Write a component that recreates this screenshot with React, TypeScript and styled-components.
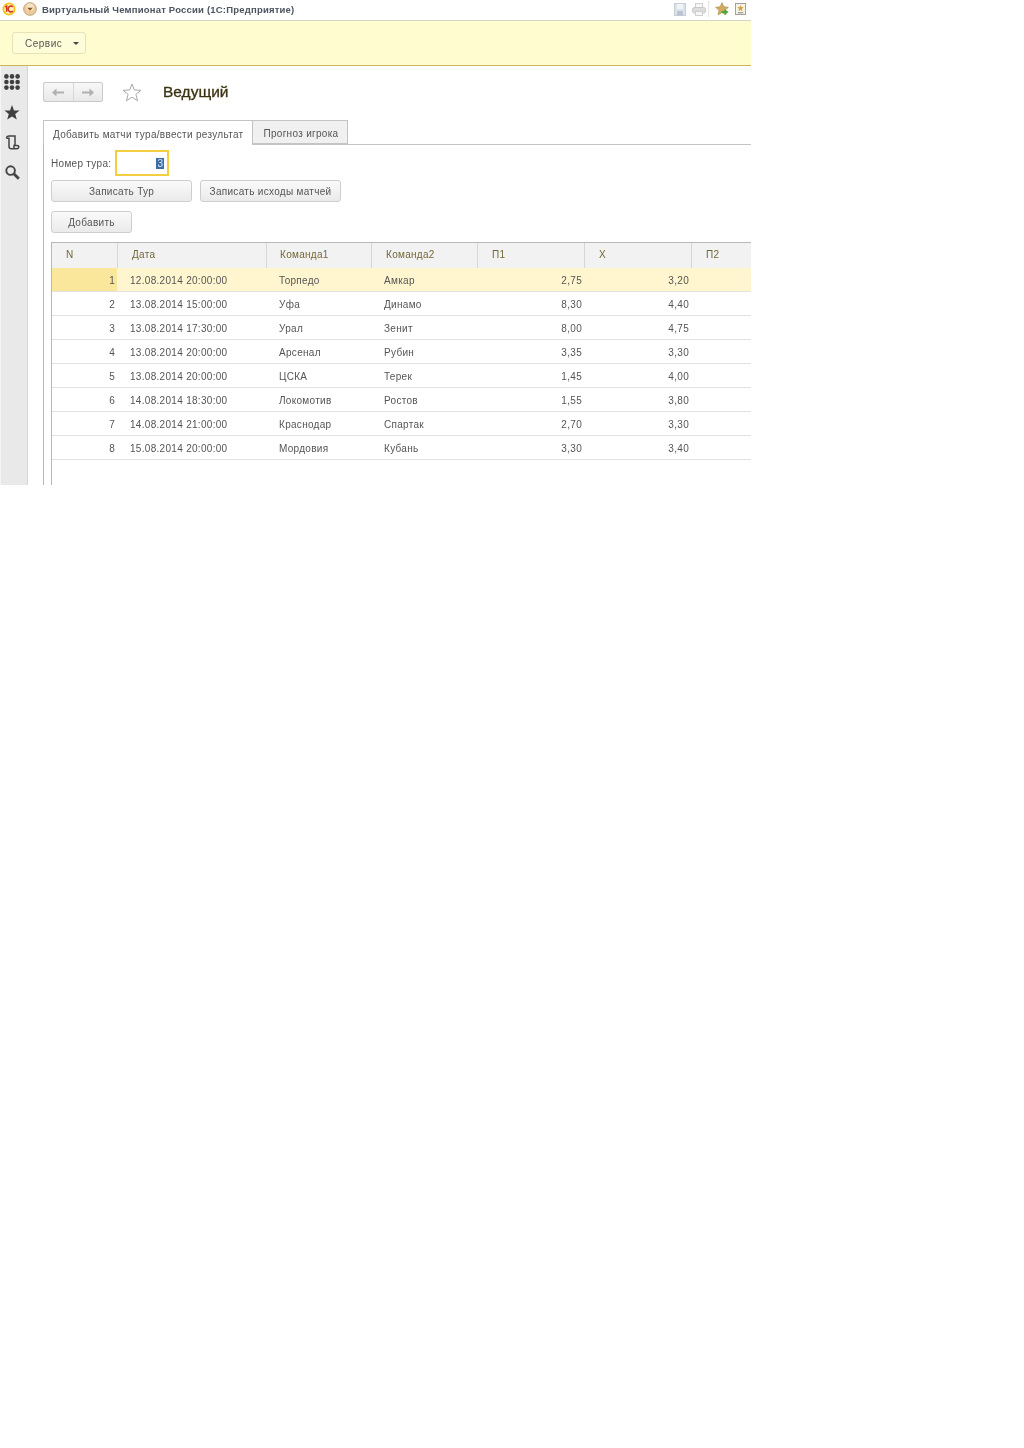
import React from 'react';
import styled, { createGlobalStyle } from 'styled-components';

const GlobalStyle = createGlobalStyle`
  html, body {
    margin: 0;
    padding: 0;
    background: #fff;
  }
  * {
    box-sizing: border-box;
  }
`;

const Window = styled.div`
  width: 751px;
  height: 485px;
  overflow: hidden;
  display: flex;
  flex-direction: column;
  font-family: 'Liberation Sans', Arial, sans-serif;
  font-size: 10px;
  letter-spacing: 0.3px;
  color: #555;
  background: #fff;
  filter: blur(0.25px);
`;

const TitleBar = styled.div`
  height: 21px;
  flex: none;
  display: flex;
  align-items: center;
  padding: 0 5px 2px 2px;
  border-bottom: 1px solid #d6d4c8;
`;

const TitleText = styled.span`
  margin-left: 5px;
  font-size: 9.5px;
  font-weight: bold;
  letter-spacing: 0.2px;
  color: #4c5560;
`;

const TitleIcons = styled.div`
  margin-left: auto;
  display: flex;
  align-items: center;
  gap: 6px;
`;

const Divider = styled.span`
  width: 1px;
  height: 16px;
  margin-left: -4px;
  background: #e6e6e6;
`;

const ServiceBar = styled.div`
  height: 45px;
  flex: none;
  display: flex;
  align-items: center;
  padding: 0 0 0 12px;
  background: #fffdd0;
  border-bottom: 1px solid #cdb65a;
`;

const ServiceButton = styled.div`
  width: 74px;
  height: 22px;
  display: flex;
  align-items: center;
  padding-left: 12px;
  gap: 11px;
  border: 1px solid #e8e2b4;
  border-radius: 3px;
  background: #fefdd9;
  letter-spacing: 0.5px;
`;

const Caret = styled.span`
  width: 0;
  height: 0;
  border-left: 3px solid transparent;
  border-right: 3px solid transparent;
  border-top: 3px solid #444;
`;

const Body = styled.div`
  flex: 1;
  display: flex;
  min-height: 0;
`;

const Sidebar = styled.div`
  width: 28px;
  flex: none;
  display: flex;
  flex-direction: column;
  align-items: center;
  gap: 15px;
  padding: 8px 4px 0 0;
  background: #e9e9e9;
  border-left: 1px solid #f6f6f6;
  border-right: 1px solid #d4d4d4;
`;

const Content = styled.div`
  flex: 1;
  min-width: 0;
  display: flex;
  flex-direction: column;
  padding: 15px 0 0 15px;
`;

const PageHeader = styled.div`
  height: 22px;
  flex: none;
  display: flex;
  align-items: center;
`;

const NavGroup = styled.div`
  width: 60px;
  height: 20px;
  display: flex;
  border: 1px solid #cacaca;
  border-radius: 2px;
  background: linear-gradient(#f8f8f8, #e8e8e8);
`;

const NavCell = styled.div<{ $divided?: boolean }>`
  flex: 1;
  display: flex;
  align-items: center;
  justify-content: center;
  border-left: ${({ $divided }) => ($divided ? '1px solid #d8d8d8' : 'none')};
`;

const StarSlot = styled.div`
  margin-left: 19px;
  display: flex;
`;

const PageTitle = styled.h1`
  margin: 0 0 0 21px;
  font-size: 15.5px;
  font-weight: normal;
  letter-spacing: 0;
  -webkit-text-stroke: 0.3px #3a3210;
  color: #3a3210;
`;

const TabStrip = styled.div`
  margin-top: 17px;
  height: 25px;
  flex: none;
  display: flex;
  border-bottom: 1px solid #c4c4c4;
`;

const Tab = styled.div<{ $active?: boolean }>`
  height: ${({ $active }) => ($active ? '25px' : '24px')};
  display: flex;
  align-items: center;
  padding: 2px 9px 0 ${({ $active }) => ($active ? '9px' : '10px')};
  border: 1px solid #c4c4c4;
  border-left: ${({ $active }) => ($active ? '1px solid #c4c4c4' : 'none')};
  border-bottom: ${({ $active }) => ($active ? 'none' : '1px solid #c4c4c4')};
  background: ${({ $active }) => ($active ? '#fff' : '#f0f0f0')};
  white-space: nowrap;
`;

const TabPanel = styled.div`
  flex: 1;
  display: flex;
  flex-direction: column;
  padding: 5px 0 0 7px;
  border-left: 1px solid #b8b8b8;
  min-height: 0;
`;

const FieldRow = styled.div`
  height: 26px;
  flex: none;
  display: flex;
  align-items: center;
  gap: 4px;
`;

const FieldInput = styled.div`
  width: 54px;
  height: 26px;
  display: flex;
  align-items: center;
  justify-content: flex-end;
  padding-right: 3px;
  border: 2px solid #f3cf3f;
  background: #fff;
`;

const SelectedValue = styled.span`
  padding: 0 1px;
  background: #3a6ea5;
  color: #d8e4f0;
`;

const ButtonRow = styled.div`
  display: flex;
  flex: none;
  gap: 8px;
  margin-top: 4px;
`;

const AddRow = styled(ButtonRow)`
  margin-top: 9px;
`;

const ActionButton = styled.div<{ $width: number }>`
  width: ${({ $width }) => $width}px;
  height: 22px;
  display: flex;
  align-items: center;
  justify-content: center;
  border: 1px solid #cecece;
  border-radius: 3px;
  background: linear-gradient(#fafafa, #eaeaea);
  white-space: nowrap;
`;

const Table = styled.div`
  margin-top: 9px;
  flex: 1;
  border-left: 1px solid #b8b8b8;
  border-top: 1px solid #b8b8b8;
`;

const GRID = '65px 149px 105px 106px 107px 107px 60px';

const HeaderRow = styled.div`
  height: 25px;
  display: grid;
  grid-template-columns: ${GRID};
  background: #f2f2f2;
`;

const HeaderCell = styled.div<{ $indent: number }>`
  display: flex;
  align-items: center;
  padding: 0 0 3px ${({ $indent }) => $indent}px;
  border-left: 1px solid #d6d6d6;
  color: #746838;

  &:first-child {
    border-left: none;
  }
`;

const DataRow = styled.div<{ $selected?: boolean }>`
  height: 24px;
  display: grid;
  grid-template-columns: ${GRID};
  border-bottom: 1px solid #e2e2e2;
  background: ${({ $selected }) => ($selected ? '#fff6cf' : '#fff')};
`;

const Cell = styled.div<{ $right?: boolean; $indent?: number; $current?: boolean }>`
  display: flex;
  align-items: center;
  justify-content: ${({ $right }) => ($right ? 'flex-end' : 'flex-start')};
  padding-top: 1px;
  padding-left: ${({ $indent }) => $indent ?? 0}px;
  padding-right: ${({ $right }) => ($right ? '2px' : '0')};
  background: ${({ $current }) => ($current ? '#fbe79b' : 'transparent')};
  white-space: nowrap;
`;

const matches = [
  ['12.08.2014 20:00:00', 'Торпедо', 'Амкар', '2,75', '3,20'],
  ['13.08.2014 15:00:00', 'Уфа', 'Динамо', '8,30', '4,40'],
  ['13.08.2014 17:30:00', 'Урал', 'Зенит', '8,00', '4,75'],
  ['13.08.2014 20:00:00', 'Арсенал', 'Рубин', '3,35', '3,30'],
  ['13.08.2014 20:00:00', 'ЦСКА', 'Терек', '1,45', '4,00'],
  ['14.08.2014 18:30:00', 'Локомотив', 'Ростов', '1,55', '3,80'],
  ['14.08.2014 21:00:00', 'Краснодар', 'Спартак', '2,70', '3,30'],
  ['15.08.2014 20:00:00', 'Мордовия', 'Кубань', '3,30', '3,40'],
];

const columns: [string, number][] = [
  ['N', 14],
  ['Дата', 14],
  ['Команда1', 13],
  ['Команда2', 14],
  ['П1', 14],
  ['X', 14],
  ['П2', 14],
];

const LogoIcon = () => (
  <svg width="14" height="14" viewBox="0 0 15 15">
    <circle cx="7.5" cy="7.5" r="7" fill="#f6c51e" />
    <circle cx="7.5" cy="7.5" r="5" fill="#fff3c0" />
    <path d="M3.6 5.5 L5 4.5 V10.5" fill="none" stroke="#d42a1c" strokeWidth="1.6" />
    <path d="M11.5 5.2 A3 3 0 1 0 11.5 9.8" fill="none" stroke="#d42a1c" strokeWidth="1.6" />
  </svg>
);

const MenuIcon = () => (
  <svg width="14" height="14" viewBox="0 0 15 15">
    <circle cx="7.5" cy="7.5" r="6.8" fill="#efc99a" stroke="#b9a27c" />
    <circle cx="7.5" cy="5.5" r="4" fill="#f8e4c6" />
    <path d="M4.5 6.2 H10.5 L7.5 9.5 Z" fill="#8a5a2a" />
  </svg>
);

const SaveIcon = () => (
  <svg width="12" height="13" viewBox="0 0 12 13">
    <rect x="0.5" y="0.5" width="11" height="12" fill="#dde3ea" stroke="#c6ced8" />
    <rect x="3" y="1" width="6" height="5" fill="#f2f5f8" />
    <rect x="3" y="8" width="6" height="4.5" fill="#bcc5cf" />
  </svg>
);

const PrintIcon = () => (
  <svg width="14" height="13" viewBox="0 0 14 13">
    <rect x="3.5" y="0.5" width="7" height="4" fill="#f6f6f6" stroke="#cfcfcf" />
    <rect x="0.5" y="4.5" width="13" height="5.5" rx="2" fill="#dcdcdc" stroke="#c8c8c8" />
    <rect x="3.5" y="8.5" width="7" height="4" fill="#f6f6f6" stroke="#cfcfcf" />
  </svg>
);

const FavoriteIcon = () => (
  <svg width="14" height="14" viewBox="0 0 14 14">
    <path d="M7 .6 8.9 4.8 13.4 5.3 10 8.3 11 12.9 7 10.5 3 12.9 4 8.3 .6 5.3 5.1 4.8Z" fill="#d3ab5e" stroke="#a88a4a" strokeWidth=".6" />
    <path d="M6.5 9 H9.5 V7 L13.5 10 9.5 13 V11 H6.5Z" fill="#4aa83a" />
  </svg>
);

const HomeIcon = () => (
  <svg width="11" height="12" viewBox="0 0 12 13">
    <rect x="0.5" y="0.5" width="11" height="12" fill="#f6f4ea" stroke="#9a9a90" />
    <path d="M6 2 7 4.4 9.5 4.7 7.6 6.4 8.2 9 6 7.6 3.8 9 4.4 6.4 2.5 4.7 5 4.4Z" fill="#cfa63f" />
    <rect x="3" y="10" width="6" height="1.2" fill="#8f8f84" />
  </svg>
);

const AppsIcon = () => (
  <svg width="16" height="16" viewBox="0 0 16 16" fill="#3f3f3f">
    {[2.4, 8, 13.6].flatMap((y) =>
      [2.4, 8, 13.6].map((x) => <circle key={`${x}-${y}`} cx={x} cy={y} r="2.3" />),
    )}
  </svg>
);

const SideStarIcon = () => (
  <svg width="16" height="15" viewBox="0 0 16 15">
    <path d="M8 0 10 5.4 15.6 5.6 11.2 9 12.8 14.6 8 11.4 3.2 14.6 4.8 9 .4 5.6 6 5.4Z" fill="#3f3f3f" />
  </svg>
);

const HistoryIcon = () => (
  <svg width="15" height="15" viewBox="0 0 15 15" fill="none" stroke="#444" strokeWidth="1.5">
    <path d="M1.5 3.2 C1.5 1.6 2.6 1 4 1 H10 V10.5" />
    <path d="M1.5 3.2 H4 V11.5 C4 13 5 13.8 6.5 13.8 H11.5 C13 13.8 13.8 13 13.8 11.5 C13.8 10.8 13 10.5 12.2 10.5 H9 V13.5" />
  </svg>
);

const SearchIcon = () => (
  <svg width="15" height="15" viewBox="0 0 15 15" fill="none" stroke="#444">
    <circle cx="5.6" cy="5.6" r="4.3" strokeWidth="1.9" />
    <path d="M8.8 8.8 13.8 13.8" strokeWidth="2.8" />
  </svg>
);

const ArrowIcon = ({ flip }: { flip?: boolean }) => (
  <svg width="12" height="9" viewBox="0 0 12 9" style={flip ? { transform: 'scaleX(-1)' } : undefined}>
    <path d="M0 4.5 4.5 0.5 V3.4 H12 V5.6 H4.5 V8.5Z" fill="#b0b0b0" />
  </svg>
);

const OutlineStarIcon = () => (
  <svg width="20" height="19" viewBox="0 0 20 19">
    <path d="M10 1 12.4 7 19 7.3 13.9 11.4 15.6 17.8 10 14.2 4.4 17.8 6.1 11.4 1 7.3 7.6 7Z" fill="#fff" stroke="#a9a9a9" />
  </svg>
);

const App = () => (
  <>
    <GlobalStyle />
    <Window>
      <TitleBar>
        <LogoIcon />
        <span style={{ width: 7 }} />
        <MenuIcon />
        <TitleText>Виртуальный Чемпионат России (1С:Предприятие)</TitleText>
        <TitleIcons>
          <SaveIcon />
          <PrintIcon />
          <Divider />
          <FavoriteIcon />
          <HomeIcon />
        </TitleIcons>
      </TitleBar>
      <ServiceBar>
        <ServiceButton>
          Сервис
          <Caret />
        </ServiceButton>
      </ServiceBar>
      <Body>
        <Sidebar>
          <AppsIcon />
          <SideStarIcon />
          <HistoryIcon />
          <SearchIcon />
        </Sidebar>
        <Content>
          <PageHeader>
            <NavGroup>
              <NavCell>
                <ArrowIcon />
              </NavCell>
              <NavCell $divided>
                <ArrowIcon flip />
              </NavCell>
            </NavGroup>
            <StarSlot>
              <OutlineStarIcon />
            </StarSlot>
            <PageTitle>Ведущий</PageTitle>
          </PageHeader>
          <TabStrip>
            <Tab $active>Добавить матчи тура/ввести результат</Tab>
            <Tab>Прогноз игрока</Tab>
          </TabStrip>
          <TabPanel>
            <FieldRow>
              Номер тура:
              <FieldInput>
                <SelectedValue>3</SelectedValue>
              </FieldInput>
            </FieldRow>
            <ButtonRow>
              <ActionButton $width={141}>Записать Тур</ActionButton>
              <ActionButton $width={141}>Записать исходы матчей</ActionButton>
            </ButtonRow>
            <AddRow>
              <ActionButton $width={81}>Добавить</ActionButton>
            </AddRow>
            <Table>
              <HeaderRow>
                {columns.map(([title, indent]) => (
                  <HeaderCell key={title} $indent={indent}>
                    {title}
                  </HeaderCell>
                ))}
              </HeaderRow>
              {matches.map(([date, home, away, p1, x], i) => (
                <DataRow key={date + home} $selected={i === 0}>
                  <Cell $right $current={i === 0}>
                    {i + 1}
                  </Cell>
                  <Cell $indent={13}>{date}</Cell>
                  <Cell $indent={13}>{home}</Cell>
                  <Cell $indent={13}>{away}</Cell>
                  <Cell $right>{p1}</Cell>
                  <Cell $right>{x}</Cell>
                  <Cell />
                </DataRow>
              ))}
            </Table>
          </TabPanel>
        </Content>
      </Body>
    </Window>
  </>
);

export default App;
